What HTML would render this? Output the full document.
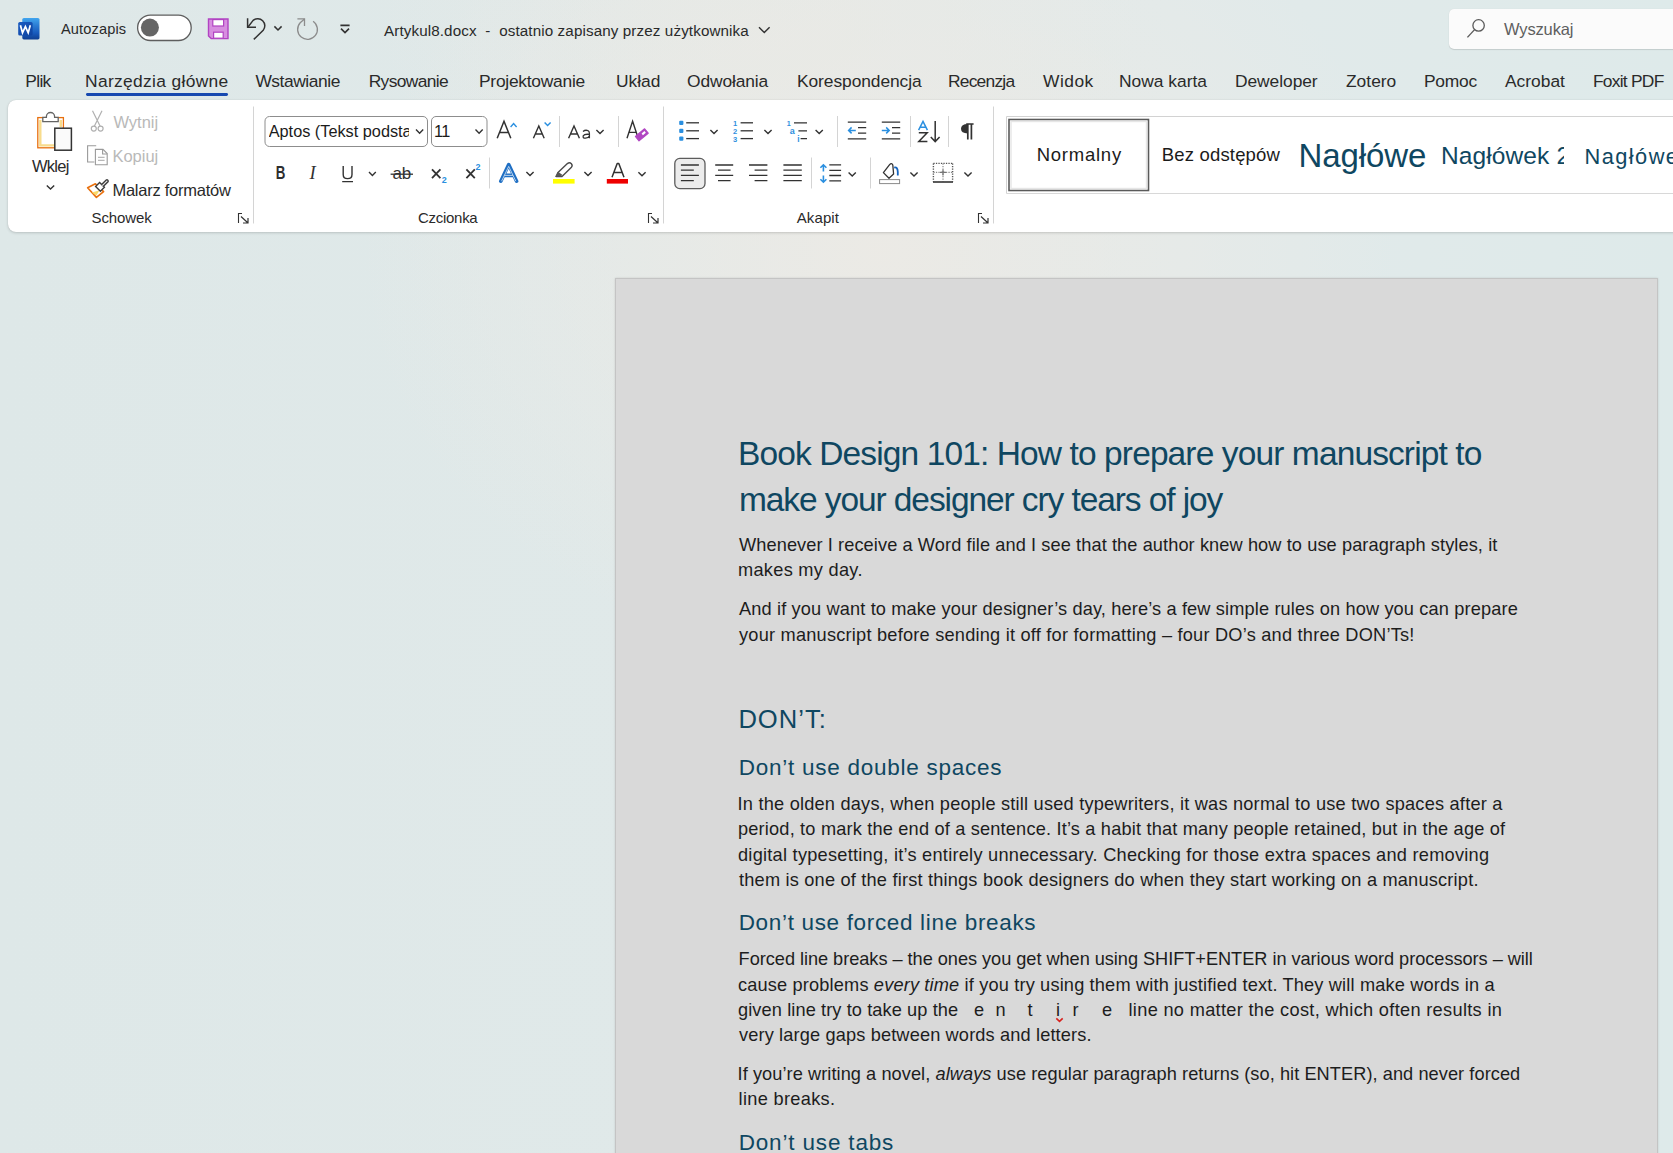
<!DOCTYPE html>
<html><head><meta charset="utf-8"><title>Word</title>
<style>
html,body{margin:0;padding:0;width:1673px;height:1153px;overflow:hidden;}
body{position:relative;font-family:"Liberation Sans",sans-serif;
background:
 radial-gradient(ellipse 520px 420px at 880px 250px, rgba(236,234,229,0.95), rgba(236,234,229,0) 100%),
 radial-gradient(ellipse 380px 220px at 760px 30px, rgba(232,233,229,0.8), rgba(232,233,229,0) 100%),
 linear-gradient(90deg,#dee8e8 0%,#e0e9e9 40%,#e2eaea 70%,#deeaea 100%);}
.t{position:absolute;white-space:nowrap;line-height:1;font-family:"Liberation Sans",sans-serif;}
.ribbon{position:absolute;left:8px;top:100px;width:1700px;height:131.5px;background:#fff;border-radius:8px;
 box-shadow:0 1px 3px rgba(0,0,0,0.16),0 0 1px rgba(0,0,0,0.14);}
.page{position:absolute;left:615px;top:278px;width:1041px;height:900px;background:#d9d9d9;border:1px solid #c4c4c4;
 box-shadow:0 0 2px rgba(0,0,0,0.12);}
.search{position:absolute;left:1449px;top:9px;width:260px;height:40px;background:#fbfbfb;border-radius:5px;
 box-shadow:0 1px 1px rgba(0,0,0,0.12),0 0 1px rgba(0,0,0,0.10);}
svg.ov{position:absolute;left:0;top:0;}
</style></head><body>
<div class="ribbon"></div>
<div class="search"></div>
<div class="page"></div>
<svg class="ov" width="1673" height="1153" viewBox="0 0 1673 1153">
<defs>
<linearGradient id="wg" x1="0" y1="0" x2="0" y2="1">
<stop offset="0" stop-color="#41a5ee"/><stop offset="0.35" stop-color="#2b7cd3"/>
<stop offset="0.7" stop-color="#185abd"/><stop offset="1" stop-color="#103f91"/></linearGradient>
<linearGradient id="wg2" x1="0" y1="0" x2="1" y2="1">
<stop offset="0" stop-color="#1a5cc2"/><stop offset="1" stop-color="#0f43a0"/></linearGradient>
</defs>
<rect x="22.3" y="18" width="17.2" height="21.4" rx="1.6" fill="url(#wg)"/>
<rect x="18.2" y="22" width="14.4" height="13.5" rx="1.6" fill="url(#wg2)"/>
<path d="M20.4 25.2 L22.5 32.8 L25.4 26.6 L28.2 32.8 L30.3 25.2" stroke="#fff" stroke-width="1.7" fill="none" stroke-linejoin="miter"/>
<rect x="137.6" y="15.1" width="53.6" height="25.4" rx="12.7" fill="#fff" stroke="#5e5e5e" stroke-width="1.3"/>
<circle cx="149.9" cy="27.6" r="9" fill="#656565"/>
<path d="M208.5 19 H228 V38.6 H211.2 L208.5 35.9 Z" fill="#d78ee0" stroke="#b143c2" stroke-width="1.4"/>
<rect x="212.8" y="19.6" width="10.8" height="6.4" fill="#fff" stroke="#b143c2" stroke-width="1.2"/>
<rect x="213.6" y="32.2" width="9.6" height="6" fill="#fff" stroke="#b143c2" stroke-width="1.2"/>
<path d="M247.6 18.3 V27.3 H256" stroke="#323232" stroke-width="1.5" fill="none"/>
<path d="M248 27 L253.1 20.4 A7.1 7.1 0 0 1 263.2 30.3 L253.8 39.4" stroke="#323232" stroke-width="1.5" fill="none"/>
<path d="M274.4 26.4 L278 30 L281.6 26.4" stroke="#323232" stroke-width="1.5" fill="none"/>
<path d="M313.1 21.3 A9.9 9.9 0 1 1 300.2 22.8 L304.5 19" stroke="#8c8c8c" stroke-width="1.3" fill="none"/>
<path d="M297.4 18.8 H304.5 V26" stroke="#8c8c8c" stroke-width="1.3" fill="none"/>
<path d="M340.4 25.4 H349.6 M341 28.6 L345 32.6 L349 28.6" stroke="#323232" stroke-width="1.6" fill="none"/>
<path d="M759 27.2 L764.3 32.6 L769.6 27.2" stroke="#323232" stroke-width="1.4" fill="none"/>
<circle cx="1478.6" cy="25.4" r="5.7" stroke="#5a5a5a" stroke-width="1.3" fill="none"/><path d="M1474.6 29.6 L1467.4 37.4" stroke="#5a5a5a" stroke-width="1.4"/>
<rect x="86" y="93.1" width="142" height="2.8" rx="1.4" fill="#1749b0"/>
<path d="M253.5 106.5 V223.5" stroke="#d4d4d4" stroke-width="1"/>
<path d="M663.5 106.5 V223.5" stroke="#d4d4d4" stroke-width="1"/>
<path d="M993.5 106.5 V223.5" stroke="#d4d4d4" stroke-width="1"/>
<path d="M559.5 116 V147" stroke="#d4d4d4" stroke-width="1"/>
<path d="M618.5 116 V147" stroke="#d4d4d4" stroke-width="1"/>
<path d="M489.5 157.5 V188.5" stroke="#d4d4d4" stroke-width="1"/>
<path d="M837.5 116 V147" stroke="#d4d4d4" stroke-width="1"/>
<path d="M910.5 116 V147" stroke="#d4d4d4" stroke-width="1"/>
<path d="M948.5 116 V147" stroke="#d4d4d4" stroke-width="1"/>
<path d="M811.5 157.5 V188.5" stroke="#d4d4d4" stroke-width="1"/>
<path d="M870.5 157.5 V188.5" stroke="#d4d4d4" stroke-width="1"/>
<path d="M238.5 223 V213.5 H242" stroke="#323232" stroke-width="1.1" fill="none"/><path d="M241 216.5 L247.5 222.5 M248 218 V223 H243" stroke="#323232" stroke-width="1.2" fill="none"/>
<path d="M648.5 223 V213.5 H652" stroke="#323232" stroke-width="1.1" fill="none"/><path d="M651 216.5 L657.5 222.5 M658 218 V223 H653" stroke="#323232" stroke-width="1.2" fill="none"/>
<path d="M978.5 223 V213.5 H982" stroke="#323232" stroke-width="1.1" fill="none"/><path d="M981 216.5 L987.5 222.5 M988 218 V223 H983" stroke="#323232" stroke-width="1.2" fill="none"/>
<rect x="37.8" y="117.6" width="25.6" height="30.2" fill="#fff" stroke="#e8700e" stroke-width="1.3"/>
<path d="M40.3 120 V145.4 H57" stroke="#f8dc8c" stroke-width="2.4" fill="none"/>
<path d="M60.8 120 V127" stroke="#f8dc8c" stroke-width="2.4" fill="none"/>
<path d="M42.8 121.6 V117.4 H46.4 V116.6 A4.1 4.1 0 0 1 54.6 116.6 V117.4 H58.2 V121.6 Z" fill="#fff" stroke="#646464" stroke-width="1.3"/>
<rect x="54.8" y="128.2" width="16.6" height="22" fill="#fafafa" stroke="#333" stroke-width="1.5"/>
<path d="M46.8 185.4 L50.5 189 L54.2 185.4" stroke="#323232" stroke-width="1.4" fill="none"/>
<g stroke="#b0b0b0" stroke-width="1.2" fill="none"><path d="M92.5 110.8 L100.3 126.4 M102 110.8 L94.2 126.4"/><circle cx="93.8" cy="128.6" r="2.5"/><circle cx="100.6" cy="128.6" r="2.5"/></g>
<g stroke="#9a9a9a" stroke-width="1.1" fill="none"><path d="M96.2 145.8 H87.6 V162 H94.4"/><path d="M95.4 149.4 H103 L107.2 153.6 V164.8 H95.4 Z" fill="#fff"/><path d="M102.6 149.6 V154 H107"/><path d="M98 157.4 H104.6 M98 160.4 H104.6" stroke="#b8b8b8"/></g>
<path d="M87.6 187.8 L95.4 183.8 L103.6 191.6 L96.4 197.4 Z" fill="#fff" stroke="#e8700e" stroke-width="1.6" stroke-linejoin="round"/>
<path d="M91.8 192.6 L99.6 190.2 L96.4 195.4 Z" fill="#f9d96a"/>
<path d="M95.6 186.4 L99.6 182.4 L104.4 187.2 L100.4 191.2 Z" fill="#fff" stroke="#3c3c3c" stroke-width="1.4"/>
<path d="M101.4 184.8 L106.2 180 A1.3 1.3 0 0 1 108 181.8 L103.2 186.6" fill="#e8e8e8" stroke="#3c3c3c" stroke-width="1.4"/>
<rect x="265" y="116.5" width="162.5" height="30" rx="4.5" fill="#fff" stroke="#8d8d8d" stroke-width="1"/>
<rect x="431.5" y="116.5" width="55.5" height="30" rx="4.5" fill="#fff" stroke="#8d8d8d" stroke-width="1"/>
<path d="M416 129.6 L419.6 133.2 L423.2 129.6" stroke="#323232" stroke-width="1.4" fill="none"/>
<path d="M475.5 129.6 L479.1 133.2 L482.7 129.6" stroke="#323232" stroke-width="1.4" fill="none"/>
<path d="M497.2 138.2 L504 121.2 L510.8 138.2 M499.6 132.4 H508.4" stroke="#323232" stroke-width="1.5" fill="none"/>
<path d="M510.6 127 L513.6 123.6 L516.6 127" stroke="#2a8fe0" stroke-width="1.4" fill="none"/>
<path d="M533.4 138.2 L538.8 126 L544.2 138.2 M535.4 134 H542.2" stroke="#323232" stroke-width="1.4" fill="none"/>
<path d="M544.6 122.4 L547.6 125.6 L550.6 122.4" stroke="#2a8fe0" stroke-width="1.4" fill="none"/>
<path d="M568.6 138.2 L574 126 L579.4 138.2 M570.6 134 H577.4" stroke="#323232" stroke-width="1.4" fill="none"/>
<path d="M583 131.4 Q585.6 129.4 588.2 130.8 Q589.4 131.6 589.4 133.4 V138.2 M589.4 134.4 Q584.4 133.8 583.2 135.8 Q582.6 138.4 585.6 138.2 Q588.4 138 589.4 136" stroke="#323232" stroke-width="1.3" fill="none"/>
<path d="M596.4 130 L600 133.6 L603.6 130" stroke="#323232" stroke-width="1.4" fill="none"/>
<path d="M627 138.2 L632.6 121.2 L638.2 138.2 M629 132.4 H636" stroke="#323232" stroke-width="1.4" fill="none"/>
<path d="M635.4 136.4 L644.6 128.8 L648.2 133.2 L639 140.8 Z" fill="#b146c2" stroke="#b146c2" stroke-width="1.2" stroke-linejoin="round"/>
<path d="M641.6 133.5 L644.5 131.1 L645.8 132.8 L642.9 135.2 Z" fill="#fff"/>
<text x="275.8" y="178.8" font-family="Liberation Sans" font-weight="bold" font-size="18.4" fill="#2e2e2e" textLength="9.6" lengthAdjust="spacingAndGlyphs">B</text>
<text x="309.6" y="178.8" font-family="Liberation Serif" font-style="italic" font-size="18.6" fill="#323232">I</text>
<path d="M343.2 166 V174.4 Q343.2 178.6 347.6 178.6 Q352 178.6 352 174.4 V166 M342.2 181.6 H353" stroke="#323232" stroke-width="1.4" fill="none"/>
<path d="M369 172 L372.4 175.4 L375.8 172" stroke="#323232" stroke-width="1.4" fill="none"/>
<text x="392.4" y="178.8" font-family="Liberation Sans" font-size="17" fill="#323232">ab</text>
<path d="M390.6 174.2 H413" stroke="#323232" stroke-width="1.3"/>
<path d="M432 169.4 L440.4 178.2 M440.4 169.4 L432 178.2" stroke="#323232" stroke-width="1.8"/>
<text x="441.8" y="183.4" font-family="Liberation Sans" font-weight="bold" font-size="9" fill="#2a8fe0">2</text>
<path d="M466.4 169.4 L474.8 178.2 M474.8 169.4 L466.4 178.2" stroke="#323232" stroke-width="1.8"/>
<text x="475.6" y="170.4" font-family="Liberation Sans" font-weight="bold" font-size="9" fill="#2a8fe0">2</text>
<path d="M500.8 181.2 L508.7 164.6 L516.6 181.2 M504 175.4 H513.4" stroke="#1f6fc4" stroke-width="3.6" fill="none" stroke-linejoin="round" stroke-linecap="round"/>
<path d="M501.6 181.2 L508.7 166.4 L515.8 181.2 M504.6 175.4 H512.8" stroke="#ffffff" stroke-width="0.8" fill="none" stroke-linejoin="round" opacity="0.85"/>
<path d="M526.4 172 L530 175.6 L533.6 172" stroke="#323232" stroke-width="1.4" fill="none"/>
<path d="M556.2 176.6 L558 172.4 L567.4 163.6 Q569.6 162 571.4 163.8 Q573 165.6 571.2 167.6 L562 176.6 Z" fill="#fff" stroke="#4a4a4a" stroke-width="1.4" stroke-linejoin="round"/>
<path d="M555 176.8 L558.4 172 L562.6 175 L560 176.8 Z" fill="#555"/>
<rect x="553" y="179" width="21.6" height="4.6" fill="#ffff00"/>
<path d="M584.4 172 L588 175.6 L591.6 172" stroke="#323232" stroke-width="1.4" fill="none"/>
<path d="M612 177.2 L617.2 163.6 H618.8 L624 177.2 M613.9 172.4 H622.1" stroke="#323232" stroke-width="1.5" fill="none" stroke-linejoin="round"/>
<rect x="606.8" y="179" width="21.2" height="4.6" fill="#ee0000"/>
<path d="M638.4 172.2 L642 175.8 L645.6 172.2" stroke="#323232" stroke-width="1.4" fill="none"/>
<rect x="679.2" y="120.7" width="4.2" height="4.2" rx="1" fill="#2a8fe0"/>
<path d="M686.2 122.8 H699" stroke="#323232" stroke-width="1.3"/>
<rect x="679.2" y="128.70000000000002" width="4.2" height="4.2" rx="1" fill="#2a8fe0"/>
<path d="M686.2 130.8 H699" stroke="#323232" stroke-width="1.3"/>
<rect x="679.2" y="136.5" width="4.2" height="4.2" rx="1" fill="#2a8fe0"/>
<path d="M686.2 138.6 H699" stroke="#323232" stroke-width="1.3"/>
<path d="M710.4 130 L714 133.6 L717.6 130" stroke="#323232" stroke-width="1.4" fill="none"/>
<text x="733" y="126.0" font-family="Liberation Sans" font-weight="bold" font-size="8" fill="#2f8fde" textLength="4.2" lengthAdjust="spacingAndGlyphs">1</text>
<path d="M740.6 122.8 H753" stroke="#323232" stroke-width="1.3"/>
<text x="733" y="134.0" font-family="Liberation Sans" font-weight="bold" font-size="8" fill="#2f8fde" textLength="4.2" lengthAdjust="spacingAndGlyphs">2</text>
<path d="M740.6 130.8 H753" stroke="#323232" stroke-width="1.3"/>
<text x="733" y="141.79999999999998" font-family="Liberation Sans" font-weight="bold" font-size="8" fill="#2f8fde" textLength="4.2" lengthAdjust="spacingAndGlyphs">3</text>
<path d="M740.6 138.6 H753" stroke="#323232" stroke-width="1.3"/>
<path d="M764.4 130 L768 133.6 L771.6 130" stroke="#323232" stroke-width="1.4" fill="none"/>
<text x="786.8" y="126" font-family="Liberation Sans" font-weight="bold" font-size="8" fill="#2f8fde" textLength="4" lengthAdjust="spacingAndGlyphs">1</text>
<text x="789.8" y="133.6" font-family="Liberation Sans" font-weight="bold" font-size="9" fill="#2f8fde" textLength="5" lengthAdjust="spacingAndGlyphs">a</text>
<text x="797.2" y="141.6" font-family="Liberation Sans" font-weight="bold" font-size="8.4" fill="#2f8fde">i</text>
<path d="M794 122.8 H807 M798.4 130.8 H807 M800.6 138.6 H807" stroke="#323232" stroke-width="1.3"/>
<path d="M815.6 130 L819.2 133.6 L822.8 130" stroke="#323232" stroke-width="1.4" fill="none"/>
<path d="M847.8 122.2 H866.1999999999999 M858.0 127.6 H866.1999999999999 M858.0 133.2 H866.1999999999999 M847.8 138.8 H866.1999999999999" stroke="#323232" stroke-width="1.3"/>
<path d="M855.8 130.4 H848.5999999999999 M851.5999999999999 127.4 L848.5999999999999 130.4 L851.5999999999999 133.4" stroke="#2a8fe0" stroke-width="1.5" fill="none"/>
<path d="M881.8 122.2 H900.1999999999999 M892.0 127.6 H900.1999999999999 M892.0 133.2 H900.1999999999999 M881.8 138.8 H900.1999999999999" stroke="#323232" stroke-width="1.3"/>
<path d="M881.8 130.4 H889.1999999999999 M886.1999999999999 127.4 L889.1999999999999 130.4 L886.1999999999999 133.4" stroke="#2a8fe0" stroke-width="1.5" fill="none"/>
<path d="M918.6 130.2 L923 121.4 L927.4 130.2 M920 127.2 H926" stroke="#2a8fe0" stroke-width="1.5" fill="none"/>
<path d="M918.8 132.8 H927.2 L918.8 141.6 H927.4" stroke="#323232" stroke-width="1.5" fill="none"/>
<path d="M935.2 121 V141.6 M930.8 137 L935.2 141.6 L939.6 137" stroke="#323232" stroke-width="1.5" fill="none"/>
<path d="M966.2 124 H973.6 M967.8 124 V139.4 M971.4 124 V139.4" stroke="#323232" stroke-width="1.7" fill="none"/><path d="M967.8 124 Q961 124 961 128.8 Q961 133.4 967.8 133.4 Z" fill="#323232"/>
<rect x="674.8" y="158.4" width="30.2" height="30.2" rx="5" fill="#ececec" stroke="#5c5c5c" stroke-width="1.3"/>
<path d="M680.9 165 H698.9 M680.9 170.2 H693.8 M680.9 175.4 H698.9 M680.9 180.7 H693.8 " stroke="#323232" stroke-width="1.3"/>
<path d="M715.2 165 H733.2 M718 170.2 H730.6 M715.2 175.4 H733.2 M718 180.7 H730.6 " stroke="#323232" stroke-width="1.3"/>
<path d="M749 165 H767.4 M754.6 170.2 H767.4 M749 175.4 H767.4 M754.6 180.7 H767.4 " stroke="#323232" stroke-width="1.3"/>
<path d="M783.4 165 H801.8 M783.4 170.2 H801.8 M783.4 175.4 H801.8 M783.4 180.7 H801.8 " stroke="#323232" stroke-width="1.3"/>
<path d="M823.4 165 V171.4 M820.4 167.8 L823.4 164.8 L826.4 167.8 M823.4 175.4 V182 M820.4 179.2 L823.4 182.2 L826.4 179.2" stroke="#2a8fe0" stroke-width="1.6" fill="none"/>
<path d="M829.3 164.9 H841.1 M829.3 170.3 H841.1 M829.3 175.5 H841.1 M829.3 180.8 H841.1 " stroke="#323232" stroke-width="1.3"/>
<path d="M848.6 172.4 L852.2 176 L855.8 172.4" stroke="#323232" stroke-width="1.4" fill="none"/>
<path d="M883.4 172.6 L889.6 164.6 Q891.6 162.6 892.8 165 L893.6 174 L889 178.2 Z" fill="#fff" stroke="#323232" stroke-width="1.3" stroke-linejoin="round"/>
<path d="M894.2 167.6 Q897.6 166.4 897.8 172 V175.6" stroke="#1565c0" stroke-width="1.8" fill="none"/>
<rect x="879.6" y="179.6" width="20" height="4" fill="#fff" stroke="#8a8a8a" stroke-width="1"/>
<path d="M910.4 172.4 L914 176 L917.6 172.4" stroke="#323232" stroke-width="1.4" fill="none"/>
<g stroke="#555" stroke-width="1.4" stroke-dasharray="1.3 1.2" fill="none"><path d="M933.4 163.4 H952.6 M933.4 163.4 V181.4 M952.6 163.4 V181.4"/></g>
<g stroke="#8a8a8a" stroke-width="1.2" stroke-dasharray="1.3 1.2" fill="none"><path d="M933.4 172.4 H952.6 M943 163.4 V181.4"/></g>
<path d="M940 172.4 H946 M943 169.4 V175.4" stroke="#777" stroke-width="1.3"/>
<path d="M933 182 H953" stroke="#323232" stroke-width="1.6"/>
<path d="M964.4 172.4 L968 176 L971.6 172.4" stroke="#323232" stroke-width="1.4" fill="none"/>
<path d="M1006.5 193.5 V116.5 H1673" stroke="#d2d2d2" stroke-width="1" fill="none"/><path d="M1006.5 193.5 H1673" stroke="#d8d8d8" stroke-width="1"/>
<rect x="1009" y="119.5" width="139.5" height="71" fill="#fff" stroke="#5a5a5a" stroke-width="1.6"/>
<rect x="1011" y="121.5" width="135.5" height="67" fill="none" stroke="#e6e6e6" stroke-width="1.4"/>
<path d="M1056.3 1018.3 L1059.5 1021.3 L1062.7 1018.3" stroke="#d8201c" stroke-width="1.6" fill="none"/>
</svg>

<div class=t style="left:61.0px;top:22.0px;font-size:14.6px;letter-spacing:0.125px;color:#2a2a2a;">Autozapis</div>
<div class=t style="left:384.0px;top:22.5px;font-size:15.2px;letter-spacing:0.115px;color:#2a2a2a;">Artykul8.docx&nbsp;&nbsp;-&nbsp;&nbsp;ostatnio zapisany przez użytkownika</div>
<div class=t style="left:1504.0px;top:21.4px;font-size:16.5px;letter-spacing:-0.143px;color:#5f5f5f;">Wyszukaj</div>
<div class=t style="left:25.3px;top:72.8px;font-size:17.4px;letter-spacing:-0.667px;color:#2a2a2a;">Plik</div>
<div class=t style="left:85.0px;top:72.8px;font-size:17.4px;letter-spacing:0.333px;color:#2a2a2a;">Narzędzia główne</div>
<div class=t style="left:255.4px;top:72.8px;font-size:17.4px;letter-spacing:-0.444px;color:#2a2a2a;">Wstawianie</div>
<div class=t style="left:368.7px;top:72.8px;font-size:17.4px;letter-spacing:-0.625px;color:#2a2a2a;">Rysowanie</div>
<div class=t style="left:479.0px;top:72.8px;font-size:17.4px;letter-spacing:-0.250px;color:#2a2a2a;">Projektowanie</div>
<div class=t style="left:616.0px;top:72.8px;font-size:17.4px;letter-spacing:0.000px;color:#2a2a2a;">Układ</div>
<div class=t style="left:687.0px;top:72.8px;font-size:17.4px;letter-spacing:-0.125px;color:#2a2a2a;">Odwołania</div>
<div class=t style="left:797.0px;top:72.8px;font-size:17.4px;letter-spacing:-0.077px;color:#2a2a2a;">Korespondencja</div>
<div class=t style="left:948.0px;top:72.8px;font-size:17.4px;letter-spacing:-0.771px;color:#2a2a2a;">Recenzja</div>
<div class=t style="left:1043.0px;top:72.8px;font-size:17.4px;letter-spacing:0.500px;color:#2a2a2a;">Widok</div>
<div class=t style="left:1119.0px;top:72.8px;font-size:17.4px;letter-spacing:0.000px;color:#2a2a2a;">Nowa karta</div>
<div class=t style="left:1235.0px;top:72.8px;font-size:17.4px;letter-spacing:-0.062px;color:#2a2a2a;">Deweloper</div>
<div class=t style="left:1346.0px;top:72.8px;font-size:17.4px;letter-spacing:0.000px;color:#2a2a2a;">Zotero</div>
<div class=t style="left:1424.0px;top:72.8px;font-size:17.4px;letter-spacing:-0.250px;color:#2a2a2a;">Pomoc</div>
<div class=t style="left:1505.0px;top:72.8px;font-size:17.4px;letter-spacing:0.000px;color:#2a2a2a;">Acrobat</div>
<div class=t style="left:1593.0px;top:72.8px;font-size:17.4px;letter-spacing:-0.750px;color:#2a2a2a;">Foxit PDF</div>
<div class=t style="left:113.4px;top:113.6px;font-size:16.5px;letter-spacing:0.000px;color:#b9b9b9;">Wytnij</div>
<div class=t style="left:112.4px;top:147.8px;font-size:16.5px;letter-spacing:0.000px;color:#b9b9b9;">Kopiuj</div>
<div class=t style="left:112.4px;top:182.0px;font-size:16.5px;letter-spacing:-0.243px;color:#2a2a2a;">Malarz formatów</div>
<div class=t style="left:31.9px;top:158.0px;font-size:16.5px;letter-spacing:-0.675px;color:#2a2a2a;">Wklej</div>
<div class=t style="left:91.5px;top:210.2px;font-size:15px;letter-spacing:-0.083px;color:#2a2a2a;">Schowek</div>
<div class=t style="left:418.0px;top:210.3px;font-size:15px;letter-spacing:-0.286px;color:#2a2a2a;">Czcionka</div>
<div class=t style="left:796.7px;top:210.0px;font-size:15px;letter-spacing:0.120px;color:#2a2a2a;">Akapit</div>
<div class=t style="left:1036.7px;top:146.4px;font-size:18.5px;letter-spacing:0.757px;color:#1b1b1b;">Normalny</div>
<div class=t style="left:1161.7px;top:146.4px;font-size:18.5px;letter-spacing:0.182px;color:#1b1b1b;">Bez odstępów</div>
<div class=t style="left:1298.4px;top:139.2px;font-size:33px;letter-spacing:-0.067px;color:#0f4761;">Nagłówe</div>
<div class=t style="left:1441.0px;top:139.8px;width:123.0px;height:31.9px;overflow:hidden;"><div class=t style="left:0;top:4px;font-size:24.5px;letter-spacing:0.111px;color:#0f4761">Nagłówek 2</div></div>
<div class=t style="left:1584.5px;top:146.3px;font-size:21.8px;letter-spacing:1.444px;color:#0f4761;">Nagłówek 3</div>
<div class=t style="left:434.0px;top:122.6px;font-size:16.3px;letter-spacing:-0.500px;color:#1b1b1b;">11</div>
<div class=t style="left:268.7px;top:118.6px;width:140.3px;height:21.2px;overflow:hidden;"><div class=t style="left:0;top:4px;font-size:16.3px;letter-spacing:0.000px;color:#1b1b1b">Aptos (Tekst podstawowy)</div></div>
<div class=t style="left:738.0px;top:436.5px;font-size:33.5px;letter-spacing:-0.884px;color:#0f4761;">Book Design 101: How to prepare your manuscript to</div>
<div class=t style="left:739.0px;top:482.6px;font-size:33.5px;letter-spacing:-1.088px;color:#0f4761;">make your designer cry tears of joy</div>
<div class=t style="left:739.0px;top:535.8px;font-size:18.2px;letter-spacing:0.093px;color:#1d1d1d;">Whenever I receive a Word file and I see that the author knew how to use paragraph styles, it</div>
<div class=t style="left:738.0px;top:560.9px;font-size:18.2px;letter-spacing:0.292px;color:#1d1d1d;">makes my day.</div>
<div class=t style="left:739.0px;top:600.4px;font-size:18.2px;letter-spacing:0.139px;color:#1d1d1d;">And if you want to make your designer’s day, here’s a few simple rules on how you can prepare</div>
<div class=t style="left:739.0px;top:626.0px;font-size:18.2px;letter-spacing:0.222px;color:#1d1d1d;">your manuscript before sending it off for formatting – four DO’s and three DON’Ts!</div>
<div class=t style="left:738.4px;top:706.8px;font-size:25.6px;letter-spacing:1.000px;color:#0f4761;">DON’T:</div>
<div class=t style="left:738.7px;top:757.4px;font-size:22.5px;letter-spacing:0.745px;color:#0f4761;">Don’t use double spaces</div>
<div class=t style="left:737.6px;top:794.5px;font-size:18.2px;letter-spacing:0.212px;color:#1d1d1d;">In the olden days, when people still used typewriters, it was normal to use two spaces after a</div>
<div class=t style="left:738.0px;top:820.0px;font-size:18.2px;letter-spacing:0.181px;color:#1d1d1d;">period, to mark the end of a sentence. It’s a habit that many people retained, but in the age of</div>
<div class=t style="left:738.0px;top:846.0px;font-size:18.2px;letter-spacing:0.251px;color:#1d1d1d;">digital typesetting, it’s entirely unnecessary. Checking for those extra spaces and removing</div>
<div class=t style="left:739.0px;top:871.0px;font-size:18.2px;letter-spacing:0.198px;color:#1d1d1d;">them is one of the first things book designers do when they start working on a manuscript.</div>
<div class=t style="left:738.7px;top:912.4px;font-size:22.5px;letter-spacing:0.667px;color:#0f4761;">Don’t use forced line breaks</div>
<div class=t style="left:738.6px;top:949.6px;font-size:18.2px;letter-spacing:-0.041px;color:#1d1d1d;">Forced line breaks – the ones you get when using SHIFT+ENTER in various word processors – will</div>
<div class=t style="left:738.0px;top:975.9px;font-size:18.2px;letter-spacing:0.161px;color:#1d1d1d;">cause problems <i>every time</i> if you try using them with justified text. They will make words in a</div>
<div class=t style="left:738.0px;top:1001.0px;font-size:18.2px;letter-spacing:0.100px;color:#1d1d1d;">given line try to take up the</div>
<div class=t style="left:1128.5px;top:1001.0px;font-size:18.2px;letter-spacing:0.315px;color:#1d1d1d;">line no matter the cost, which often results in</div>
<div class=t style="left:739.0px;top:1026.0px;font-size:18.2px;letter-spacing:0.141px;color:#1d1d1d;">very large gaps between words and letters.</div>
<div class=t style="left:737.6px;top:1064.8px;font-size:18.2px;letter-spacing:0.065px;color:#1d1d1d;">If you’re writing a novel, <i>always</i> use regular paragraph returns (so, hit ENTER), and never forced</div>
<div class=t style="left:738.6px;top:1090.0px;font-size:18.2px;letter-spacing:0.309px;color:#1d1d1d;">line breaks.</div>
<div class=t style="left:738.7px;top:1132.0px;font-size:22.5px;letter-spacing:0.831px;color:#0f4761;">Don’t use tabs</div>
<div class=t style="left:973.9px;top:1001.0px;font-size:18.2px;letter-spacing:0.000px;color:#1d1d1d;">e</div>
<div class=t style="left:995.6px;top:1001.0px;font-size:18.2px;letter-spacing:0.000px;color:#1d1d1d;">n</div>
<div class=t style="left:1027.5px;top:1001.0px;font-size:18.2px;letter-spacing:0.000px;color:#1d1d1d;">t</div>
<div class=t style="left:1056.0px;top:1001.0px;font-size:18.2px;letter-spacing:0.000px;color:#1d1d1d;">i</div>
<div class=t style="left:1072.5px;top:1001.0px;font-size:18.2px;letter-spacing:0.000px;color:#1d1d1d;">r</div>
<div class=t style="left:1102.0px;top:1001.0px;font-size:18.2px;letter-spacing:0.000px;color:#1d1d1d;">e</div>
</body></html>
